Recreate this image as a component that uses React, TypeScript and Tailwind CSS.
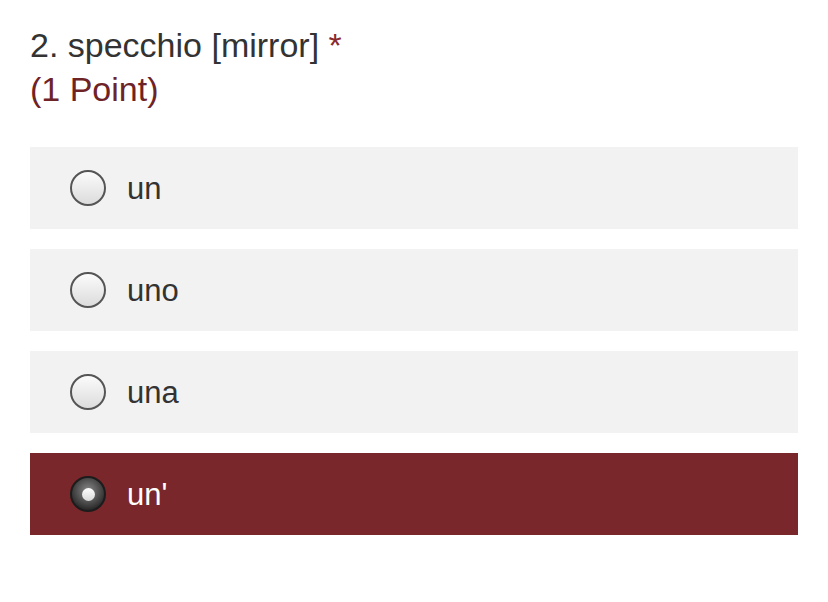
import React from "react";

const options = ["un", "uno", "una", "un'"];

export default function App() {
  const selected = 3;
  return (
    <div className="min-h-[602px] w-[828px] bg-white px-[30px] pt-[23px] font-['Liberation_Sans',Arial,sans-serif]">
      <div className="text-[34px] leading-[44px] text-[#333]">
        2. specchio [mirror] <span className="text-[#8a2a2c]">*</span>
      </div>
      <div className="text-[34px] leading-[44px] text-[#6e2326]">(1 Point)</div>
      <div className="mt-[36px] flex flex-col gap-5">
        {options.map((o, i) => (
          <Option key={o} label={o} checked={i === selected} />
        ))}
      </div>
    </div>
  );
}

function Option({ label, checked }: { label: string; checked: boolean }) {
  return (
    <div
      className={`flex h-[82px] items-center gap-[21px] pl-[40px] ${
        checked ? "bg-[#79272a] text-white" : "bg-[#f2f2f2] text-[#333]"
      }`}
    >
      {checked ? (
        <div className="flex h-[36px] w-[36px] items-center justify-center rounded-full border-2 border-[#1c1c1c] bg-[radial-gradient(circle_at_50%_40%,#8a8a8a,#2a2a2a_75%)]">
          <div className="h-[13px] w-[13px] rounded-full bg-gradient-to-b from-white to-[#d8d8d8]" />
        </div>
      ) : (
        <div className="h-[36px] w-[36px] rounded-full border-2 border-[#555] bg-gradient-to-b from-[#fbfbfb] to-[#dcdcdc]" />
      )}
      <span className="text-[31px] leading-none">{label}</span>
    </div>
  );
}
